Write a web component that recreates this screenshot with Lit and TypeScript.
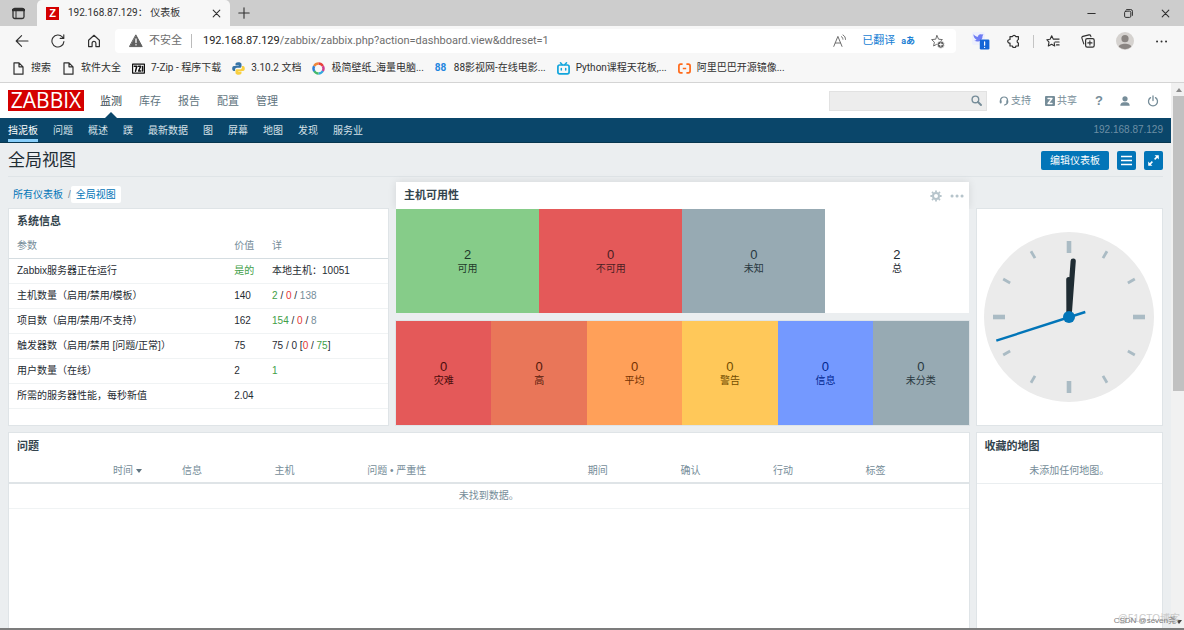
import { LitElement, html, svg, css } from "lit";
import { customElement } from "lit/decorators.js";
import { classMap } from "lit/directives/class-map.js";
import { styleMap } from "lit/directives/style-map.js";

const icon = (size: number, box: string, body: unknown) => html`
  <svg width=${size} height=${size} viewBox=${box} fill="none" stroke="currentColor"
    stroke-linecap="round" stroke-linejoin="round" aria-hidden="true">${body}</svg>`;

const STAR = "M7 1.6 L8.6 5.2 12.4 5.6 9.6 8.2 10.4 12 7 10.1 3.6 12 4.4 8.2 1.6 5.6 5.4 5.2Z";

const icons = {
  tabs: icon(13, "0 0 13 13", svg`<rect x="1" y="1.5" width="11" height="10" rx="1.8" stroke-width="1.3"/><path d="M1 3h11" stroke-width="2.6"/><path d="M4 3.5v8" stroke-width="1"/>`),
  close: icon(9, "0 0 9 9", svg`<path d="M1.2 1.2l6.6 6.6M7.8 1.2L1.2 7.8" stroke-width="1.1"/>`),
  plus: icon(12, "0 0 12 12", svg`<path d="M6 .8v10.4M.8 6h10.4" stroke-width="1.1"/>`),
  minimize: icon(9, "0 0 9 9", svg`<path d="M.8 4.5h7.4"/>`),
  restore: icon(9, "0 0 9 9", svg`<rect x=".6" y="2.2" width="6.2" height="6.2" rx="1.2"/><path d="M2.6.6h4.2a1.6 1.6 0 0 1 1.6 1.6v4.2"/>`),
  back: icon(14, "0 0 14 14", svg`<path d="M13 7H1.2M6.6 1.6L1.2 7l5.4 5.4" stroke-width="1.1"/>`),
  refresh: icon(14, "0 0 14 14", svg`<path d="M12.9 7.6A6 6 0 1 1 11.4 3l1.2 1.2M12.8.8v3.6H9.2" stroke-width="1.1"/>`),
  home: icon(14, "0 0 14 14", svg`<path d="M1.6 6.3L7 1.3l5.4 5v6.3H8.9V9.2a1.9 1.9 0 0 0-3.8 0v3.4H1.6Z" stroke-width="1.2"/>`),
  warning: icon(14, "0 0 14 14", svg`<path d="M7 1.2L13.2 12.6H.8Z" fill="#5f5f5f" stroke="#5f5f5f"/><path d="M7 5v3.6M7 10.6v.3" stroke="#fff" stroke-width="1.3"/>`),
  readAloud: icon(14, "0 0 14 14", svg`<path d="M.8 12.4L4.9 2.4 9 12.4M2.3 9h5.2M8.4 2.6c1 .6 1.4 1.4 1.5 2.6M10 1c1.7 1 2.5 2.4 2.5 4.4"/>`),
  starAdd: icon(15, "0 0 15 15", svg`<path d=${STAR}/><circle cx="10.8" cy="10.6" r="3.6" fill="#5c5c5c" stroke="#fff" stroke-width=".7"/><path d="M10.8 9v3.2M9.2 10.6h3.2" stroke="#fff"/>`),
  bird: icon(18, "0 0 18 18", svg`<rect width="13" height="13" rx="2" fill="#eef0fd" stroke="none"/><path d="M1.4 2.2c1.8 2 3.4 2.4 4.6 2.6C6 2.8 8 1.4 9.8 2.6l1.6-.4-.9 2c0 4.4-4.5 6.8-8.3 4.4 1 0 1.8-.3 2.4-.9C2.5 6.800 1.400 4.600 1.400 2.200Z" fill="#6f7df4" stroke="none"/><rect x="7.800" y="7.500" width="9.600" height="10" rx="1.200" fill="#1466d6" stroke="none"/><path d="M12.600 9.800v3.400M12.600 15.300v.1" stroke="#fff" stroke-width="1.200"/>`),
  puzzle: icon(14, "0 0 14 14", svg`<path d="M3 2.600h2.400a1.800 1.800 0 0 1 3.400 0h2.600v2.900a1.900 1.900 0 0 0 0 3.600v2.900H8.900a1.700 1.700 0 0 1-3.400 0H3V9a1.700 1.700 0 0 1-1-3.300 1.700 1.700 0 0 1 1-.2Z" stroke-width="1.200"/>`),
  favorites: icon(14, "0 0 14 14", svg`<path d="M8.200 8.800l.5 3.200L5.600 10.200 2.300 12l.7-3.800L.8 5.700l3.300-.5L5.700 1.800l1.500 3.300h5.900M9 8h4.100M10.500 10.900h2.600" stroke-width="1.100"/>`),
  collections: icon(14, "0 0 14 14", svg`<rect x="4.600" y="4.600" width="8.600" height="8.600" rx="1.600" stroke-width="1.200"/><path d="M8.900 6.800v4.200M6.800 8.900H11M2.800 9.900L.9 4.200a1.400 1.400 0 0 1 1-1.800L8 .9a1.400 1.400 0 0 1 1.700 1l.2.800" stroke-width="1.100"/>`),
  avatar: icon(18, "0 0 18 18", svg`<circle cx="9" cy="9" r="9" fill="#d5d2cf" stroke="none"/><circle cx="9" cy="6.700" r="3.600" fill="#8a8582" stroke="none"/><path d="M2.800 14.800c0-4 12.400-4 12.400 0A9 9 0 0 1 2.800 14.800Z" fill="#8a8582" stroke="none"/>`),
  more: icon(13, "0 0 13 13", svg`<path d="M2 6.500h.1M6.500 6.500h.1M11 6.500h.1" stroke-width="1.900"/>`),
  doc: icon(13, "0 0 13 13", svg`<path d="M2 .8h5l4 4v7.400H2ZM7 .8v4h4" stroke-width="1.200"/>`),
  sevenZip: icon(13, "0 0 13 13", svg`<rect x=".6" y="2.100" width="11.800" height="9" fill="#fff" stroke="#111" stroke-width="1.200"/><path d="M2.300 4.300h2.500L3.500 9.300M6.500 4.300h2.200L6.600 9h2.200M10.600 4.500v4.600" stroke="#111" stroke-width="1.500"/>`),
  python: icon(13, "0 0 13 13", svg`<path d="M6.300.3C3.700.3 3.500 1.400 3.500 2.300v1.200h3.200v.6H2C.7 4.100.2 5.200.2 6.600c0 1.500.6 2.500 1.700 2.500h1.200V7.600c0-1 .8-1.800 1.800-1.800H8c.9 0 1.500-.7 1.500-1.500v-2C9.500.8 8 .3 6.300.3Z" fill="#3874a6" stroke="none"/><path d="M6.700 12.700c2.600 0 2.800-1.100 2.800-2V9.500H6.300v-.6H11c1.300 0 1.800-1.100 1.800-2.500 0-1.500-.6-2.500-1.700-2.500H9.900v1.500c0 1-.8 1.800-1.800 1.800H5c-.9 0-1.500.7-1.500 1.500v2c0 1.500 1.500 2 3.200 2Z" fill="#f8cf40" stroke="none"/>`),
  wheel: icon(13, "0 0 13 13", svg`<g fill="none" stroke-width="2.500" stroke-linecap="butt"><path d="M2.200 4A5 5 0 0 1 6.500 1.500" stroke="#f0883a"/><path d="M6.500 1.500A5 5 0 0 1 10.800 4" stroke="#e8403c"/><path d="M10.800 4A5 5 0 0 1 10.800 9" stroke="#cf3f8d"/><path d="M10.800 9A5 5 0 0 1 6.500 11.500" stroke="#37a8e0"/><path d="M6.500 11.500A5 5 0 0 1 2.200 9" stroke="#43b96b"/><path d="M2.200 9A5 5 0 0 1 2.200 4" stroke="#2f7fd6"/></g>`),
  tv: icon(13, "0 0 13 13", svg`<rect x=".9" y="3" width="11.200" height="8.800" rx="1.800" stroke="#12a5dc" stroke-width="1.700"/><path d="M3.500.8l1.600 1.800M9.500.8L7.900 2.600M4.300 6.500v1.600M8.700 6.500v1.600" stroke="#12a5dc" stroke-width="1.500"/>`),
  aliyun: icon(13, "0 0 13 13", svg`<path d="M4.600 2.200H2.700A1.900 1.900 0 0 0 .9 4.100v4.800a1.900 1.900 0 0 0 1.800 1.900h1.900M8.400 2.200h1.900a1.900 1.900 0 0 1 1.800 1.900v4.800a1.900 1.900 0 0 1-1.800 1.900H8.400M4.800 6.500h3.400" stroke="#ff6a1a" stroke-width="1.700" stroke-linecap="butt"/>`),
  search: icon(11, "0 0 11 11", svg`<circle cx="4.400" cy="4.400" r="3.300" stroke-width="1.400"/><path d="M7 7l3 3" stroke-width="1.900"/>`),
  headset: icon(10, "0 0 10 10", svg`<path d="M1.500 5.800V4.500a3.500 3.500 0 0 1 7 0v1.300c0 2-1 2.900-3 3.200" stroke-width="1.200"/><path d="M1.700 5v1.600M8.300 5v1.600" stroke-width="1.900"/>`),
  share: icon(10, "0 0 10 10", svg`<rect width="10" height="10" rx="1" fill="currentColor" stroke="none"/><path d="M3 2.500h4L3 7.500h4" stroke="#fff" stroke-width="1.300"/>`),
  person: icon(12, "0 0 12 12", svg`<circle cx="6" cy="3.800" r="2.600" fill="currentColor" stroke="none"/><path d="M1.300 10.800c0-3.200 2.400-3.600 4.700-3.600s4.700.4 4.700 3.600Z" fill="currentColor" stroke="none"/>`),
  power: icon(12, "0 0 12 12", svg`<path d="M3.500 2.600a4.500 4.500 0 1 0 5 0M6 1v4.600" stroke-width="1.300"/>`),
  list: icon(13, "0 0 13 13", svg`<path d="M1 2.500h11M1 6.500h11M1 10.500h11" stroke-width="1.500" stroke-linecap="butt"/>`),
  expand: icon(13, "0 0 13 13", svg`<path d="M7.600 5.400l3-3M5.400 7.600l-3 3" stroke-width="1.500" stroke-linecap="butt"/><path d="M7.600 1.200h4.200v4.200ZM1.200 7.600v4.200h4.200Z" fill="currentColor" stroke="none"/>`),
  gear: icon(12, "0 0 12 12", svg`<circle cx="6" cy="6" r="3" stroke-width="2"/><path d="M6 .4v1.600M6 10v1.600M.4 6H2M10 6h1.600M2 2l1.200 1.200M8.800 8.800L10 10M2 10l1.200-1.200M8.800 3.200L10 2" stroke-width="1.800" stroke-linecap="butt"/>`),
  dots: icon(14, "0 0 14 14", svg`<path d="M2 7h.1M7 7h.1M12 7h.1" stroke-width="3"/>`),
};

const base = css`
  *, *::before, *::after { box-sizing: border-box; }
  svg { display: block; flex: none; }
  button { display: flex; align-items: center; justify-content: center; margin: 0; padding: 0; border: 0; background: none; color: inherit; font: inherit; }
  a { color: inherit; text-decoration: none; }
  input { min-width: 0; margin: 0; padding: 0; border: 0; outline: 0; background: none; color: inherit; font: inherit; }
  .row { display: flex; align-items: center; }
`;

@customElement("browser-chrome")
class BrowserChrome extends LitElement {
  static styles = [base, css`
    :host { display: block; flex: none; color: #303030; background: #f7f7f7; border-bottom: 1px solid #d4d4d4;
      font: 10px/16px Roboto, "Noto Sans CJK SC", sans-serif; white-space: nowrap; }
    .tabs { height: 26px; background: #cdcdcd; padding-right: 14px; }
    .menu { width: 37px; height: 26px; }
    .tab { width: 193px; height: 26px; padding: 0 9px; background: #f7f7f7; border-radius: 5px 5px 0 0; }
    .fav { width: 13px; height: 13px; margin-right: 9px; background: #d40000; color: #fff; font: bold 11px/13px "Liberation Sans", sans-serif; text-align: center; }
    .grow { flex: 1; }
    .new { margin-left: 8px; }
    .window { gap: 28px; }
    .tools { height: 30px; padding: 0 16px 0 15px; }
    .nav { gap: 22px; width: 100px; }
    .address { flex: 1; height: 24px; padding: 0 11px 0 14px; background: #fff; border-radius: 4px; font-size: 11px; color: #6e6e6e; }
    .secure { gap: 6px; padding-right: 9px; margin-right: 11px; border-right: 1px solid #bbb; line-height: 12px; }
    .host { color: #222; }
    .translate { color: #1a7fd4; gap: 6px; margin: 0 15px; }
    .kana { font-weight: bold; font-size: 9px; }
    .ext { margin-left: 16px; gap: 21px; height: 18px; }
    .shop { margin-right: -4px; }
    .line { width: 1px; height: 13px; background: #c4c4c4; margin: 0 -9px; }
    .marks { height: 26px; padding: 0 12px 2px; gap: 11px; }
    .mark { gap: 6px; }
    .badge { width: 13px; color: #1f86df; font-weight: bold; }
  `];

  marks = [
    [icons.doc, "搜索"], [icons.doc, "软件大全"], [icons.sevenZip, "7-Zip - 程序下载"], [icons.python, "3.10.2 文档"],
    [icons.wheel, "极简壁纸_海量电脑..."], [html`<span class="badge">88</span>`, "88影视网-在线电影..."],
    [icons.tv, "Python课程天花板,..."], [icons.aliyun, "阿里巴巴开源镜像..."],
  ];

  render() {
    return html`
      <div class="tabs row">
        <button class="menu" aria-label="标签页">${icons.tabs}</button>
        <div class="tab row"><span class="fav">Z</span><span class="grow">192.168.87.129： 仪表板</span><button aria-label="关闭标签页">${icons.close}</button></div>
        <button class="new" aria-label="新建标签页">${icons.plus}</button>
        <span class="grow"></span>
        <div class="window row">
          <button aria-label="最小化">${icons.minimize}</button><button aria-label="还原">${icons.restore}</button><button aria-label="关闭">${icons.close}</button>
        </div>
      </div>
      <div class="tools row">
        <div class="nav row"><button aria-label="后退">${icons.back}</button><button aria-label="刷新">${icons.refresh}</button><button aria-label="主页">${icons.home}</button></div>
        <div class="address row">
          <span class="secure row">${icons.warning}不安全</span>
          <label class="host" for="url">192.168.87.129</label>
          <input class="grow" id="url" value="/zabbix/zabbix.php?action=dashboard.view&ddreset=1">
          <button aria-label="朗读">${icons.readAloud}</button>
          <button class="translate">已翻译 <span class="kana">aあ</span></button>
          <button aria-label="收藏">${icons.starAdd}</button>
        </div>
        <div class="ext row">
          <button class="shop" aria-label="扩展">${icons.bird}</button><button aria-label="插件">${icons.puzzle}</button><span class="line"></span>
          <button aria-label="收藏夹">${icons.favorites}</button><button aria-label="集锦">${icons.collections}</button>
          <button aria-label="个人资料">${icons.avatar}</button><button aria-label="更多">${icons.more}</button>
        </div>
      </div>
      <nav class="marks row">${this.marks.map(([i, t]) => html`<a class="mark row" href="#">${i}<span>${t}</span></a>`)}</nav>`;
  }
}

@customElement("clock-face")
class ClockFace extends LitElement {
  static styles = css`:host { display: block; } svg { display: block; }`;
  render() {
    const ticks = Array.from({ length: 12 }, (_, i) => {
      const main = i % 3 === 0;
      return svg`<line y1="-76" y2=${main ? -64 : -68} stroke="#aabbc4" stroke-width=${main ? 4.6 : 2.8} transform="rotate(${i * 30})"/>`;
    });
    return html`<svg width="170" height="170" viewBox="-85 -85 170 170" role="img" aria-label="时钟">
      <circle r="85" fill="#ebebeb"/>${ticks}
      <g stroke="#1f2c33" stroke-width="5.2" stroke-linecap="round"><path d="M0 0L-.2 -37.500"/><path d="M0 0L4.200 -56"/></g>
      <path d="M16.300 -5L-72.700 23.700" stroke="#0275b8" stroke-width="2.400"/><circle r="6" fill="#0275b8"/>
    </svg>`;
  }
}

type Tile = [count: string, label: string, bg: string, fg: string];

@customElement("app-root")
class AppRoot extends LitElement {
  static styles = [base, css`
    :host { display: flex; flex-direction: column; height: 100vh; overflow: hidden; position: relative;
      border-bottom: 2px solid #7c7c7c; color: #1f2c33; background: #ebeef0;
      font: 10px/16px "Liberation Sans", "Noto Sans CJK SC", sans-serif; box-sizing: border-box; }
    .view { display: flex; flex: 1; min-height: 0; }
    .page { display: flex; flex-direction: column; flex: 1; min-width: 0; }
    .grow { flex: 1; }
    .scroll { width: 13px; padding: 5px 0 4px 2px; background: #f1f1f1; display: flex; flex-direction: column; align-items: center; }
    .up, .down { border: 3px solid transparent; height: 0; }
    .up { border-top: 0; border-bottom: 4px solid #8b8b8b; }
    .down { border-bottom: 0; border-top: 4px solid #404040; }
    .thumb { width: 11px; height: 295px; margin: 4px 0 auto; background: #c1c1c1; }

    .top { height: 35px; padding: 0 12px 0 8px; background: #fff; color: #768d99; }
    .logo { height: 21px; width: 76px; margin-right: 16px; background: #d40000; color: #fff; text-align: center; font: 21px/21px "Open Sans", sans-serif; }
    .main { gap: 17px; font-size: 11px; color: #5f7480; align-self: stretch; }
    .main a { display: flex; align-items: center; height: 35px; position: relative; }
    .main .on { color: #33444d; }
    .on::after { content: ""; position: absolute; left: 50%; bottom: 0; margin-left: -6px; border: 6px solid transparent; border-top: 0; border-bottom-color: #0a466a; }
    .search { width: 158px; height: 20px; padding: 0 4px; background: #ededed; border: 1px solid #e2e2e2; margin-right: 12px; }
    .tool { gap: 2px; margin-right: 14px; }
    .account { gap: 16px; margin-left: 4px; }
    .q { font-weight: bold; font-size: 13px; }

    .sub { height: 25px; padding: 0 8px; gap: 15px; background: #0a466a; color: #d5e0e7; border-bottom: 1px solid #07364f; }
    .sub a { display: flex; align-items: center; height: 24px; border-bottom: 3px solid transparent; border-top: 5px solid transparent; }
    .sub .here { border-bottom-color: #87cefa; color: #fff; }
    .server { color: #6d8fa5; }

    .head { height: 34px; margin: 0 8px; padding-top: 2px; gap: 8px; border-bottom: 1px solid #dfe4e7; }
    h1 { flex: 1; margin: 0; font: 17px/24px "Liberation Sans", "Noto Sans CJK SC", sans-serif; }
    .btn { height: 19px; min-width: 19px; background: #0275b8; color: #fff; border-radius: 2px; }
    .edit { padding: 0 9px; }
    .crumbs { height: 32px; padding: 3px 13px 0; gap: 5px; color: #0275b8; }
    .slash { color: #768d99; }
    .now { padding: 0 5px; margin-left: -5px; background: #fff; border-radius: 2px; line-height: 17px; }

    .grid { flex: 1; min-height: 0; display: grid; grid-template-columns: repeat(12, 1fr); grid-template-rows: 104px 104px 1fr; gap: 8px; padding: 0 9px; }
    .widget { min-width: 0; background: #fff; box-shadow: 0 0 0 1px #dfe4e7; position: relative; }
    .info { grid-area: 1 / 1 / 3 / 5; }
    .hosts { grid-area: 1 / 5 / 2 / 11; box-shadow: none; }
    .sev { grid-area: 2 / 5 / 3 / 11; }
    .clock { grid-area: 1 / 11 / 3 / 13; display: flex; align-items: center; justify-content: center; }
    .problems { grid-area: 3 / 1 / 4 / 11; padding-top: 1px; }
    .maps { grid-area: 3 / 11 / 4 / 13; padding-top: 1px; }
    .lift { position: absolute; left: 0; right: 0; bottom: 100%; height: 27px; padding: 0 5px 0 8px; gap: 8px; background: #fff; color: #b6c4cb; box-shadow: 0 0 9px rgba(0, 0, 0, .1); clip-path: inset(-12px -12px 0 -12px); }
    h2 { margin: 0; padding: 0 8px; color: #33444d; font: bold 11px/25px "Liberation Sans", "Noto Sans CJK SC", sans-serif; }
    .lift h2 { flex: 1; padding: 0; }
    .tiles { display: flex; height: 100%; }
    .tile { flex: 1; display: flex; flex-direction: column; align-items: center; justify-content: center; line-height: 14px; }
    .num { font-size: 13px; line-height: 15px; }

    table { width: 100%; border-collapse: separate; border-spacing: 0; table-layout: fixed; }
    th, td { height: 25px; padding: 0 8px; text-align: left; white-space: nowrap; border-bottom: 1px solid #f0f3f4; }
    th { color: #768d99; font-weight: normal; border-bottom-color: #d5dde1; }
    .c1 { width: 57.3%; } .c2 { width: 10%; }
    .p-time { width: 14.7%; } .p-gap { width: 2.5%; } .p-s { width: 9.650%; } .p-wide { width: 23%; }
    .problems th { border-bottom: 2px solid #dfe4e7; }
    .problems .time { text-align: right; }
    .sort { display: inline-block; border: 3px solid transparent; border-top: 4px solid #5f7480; border-bottom: 0; margin-left: 3px; vertical-align: 1px; }
    .empty { text-align: center; color: #768d99; margin: 0; }
    .line { line-height: 24px; border-bottom: 1px solid #eaeef0; }
    .ok { color: #429e47; } .bad { color: #e33734; } .dim { color: #768d99; }
    .mark { position: absolute; bottom: 0; white-space: nowrap; line-height: 15px; }
    .m1 { right: 8px; color: #808080; font-size: 8px; }
    .m2 { right: 4px; bottom: 2px; color: #cccccc; }
  `];

  hosts: Tile[] = [
    ["2", "可用", "#86cc89", "#1f3a2a"], ["0", "不可用", "#e45959", "#4a2023"],
    ["0", "未知", "#97aab3", "#28383f"], ["2", "总", "#ffffff", "#1f2c33"],
  ];
  severities: Tile[] = [
    ["0", "灾难", "#e45959", "#4b0c0c"], ["0", "高", "#e97659", "#52190b"], ["0", "平均", "#ffa059", "#733100"],
    ["0", "警告", "#ffc859", "#734d00"], ["0", "信息", "#7499ff", "#00268e"], ["0", "未分类", "#97aab3", "#28383f"],
  ];
  rows = [
    ["Zabbix服务器正在运行", html`<span class="ok">是的</span>`, "本地主机：10051"],
    ["主机数量（启用/禁用/模板）", "140", html`<span class="ok">2</span> / <span class="bad">0</span> / <span class="dim">138</span>`],
    ["项目数（启用/禁用/不支持）", "162", html`<span class="ok">154</span> / <span class="bad">0</span> / <span class="dim">8</span>`],
    ["触发器数（启用/禁用 [问题/正常]）", "75", html`75 / 0 [<span class="bad">0</span> / <span class="ok">75</span>]`],
    ["用户数量（在线）", "2", html`<span class="ok">1</span>`],
    ["所需的服务器性能，每秒新值", "2.04", ""],
  ];

  tiles(list: Tile[]) {
    return html`<div class="tiles">${list.map(([n, label, background, color]) => html`
      <div class="tile" style=${styleMap({ background, color })}><span class="num">${n}</span><span>${label}</span></div>`)}</div>`;
  }

  render() {
    return html`
      <browser-chrome></browser-chrome>
      <div class="view">
        <div class="page">
          <header class="top row">
            <a class="logo" href="#">ZABBIX</a>
            <nav class="main row">${["监测", "库存", "报告", "配置", "管理"].map((t, i) => html`<a href="#" class=${classMap({ on: i === 0 })}>${t}</a>`)}</nav>
            <span class="grow"></span>
            <div class="search row"><input class="grow" type="text" aria-label="搜索"><button aria-label="搜索">${icons.search}</button></div>
            <a class="tool row" href="#">${icons.headset}支持</a>
            <a class="tool row" href="#">${icons.share}共享</a>
            <div class="account row"><a class="q" href="#">?</a><a href="#" aria-label="用户">${icons.person}</a><a href="#" aria-label="退出">${icons.power}</a></div>
          </header>
          <nav class="sub row">
            ${["挡泥板", "问题", "概述", "蹼", "最新数据", "图", "屏幕", "地图", "发现", "服务业"].map((t, i) => html`<a href="#" class=${classMap({ here: i === 0 })}>${t}</a>`)}
            <span class="grow"></span><span class="server">192.168.87.129</span>
          </nav>
          <div class="head row">
            <h1>全局视图</h1>
            <button class="btn edit">编辑仪表板</button>
            <button class="btn" aria-label="菜单">${icons.list}</button>
            <button class="btn" aria-label="全屏">${icons.expand}</button>
          </div>
          <div class="crumbs row"><a href="#">所有仪表板</a><span class="slash">/</span><a class="now" href="#">全局视图</a></div>
          <main class="grid">
            <section class="widget info">
              <h2>系统信息</h2>
              <table>
                <colgroup><col class="c1"><col class="c2"><col></colgroup>
                <thead><tr><th>参数</th><th>价值</th><th>详</th></tr></thead>
                <tbody>${this.rows.map(r => html`<tr>${r.map(c => html`<td>${c}</td>`)}</tr>`)}</tbody>
              </table>
            </section>
            <section class="widget hosts">
              <div class="lift row"><h2>主机可用性</h2><button aria-label="设置">${icons.gear}</button><button aria-label="更多">${icons.dots}</button></div>
              ${this.tiles(this.hosts)}
            </section>
            <section class="widget sev">${this.tiles(this.severities)}</section>
            <section class="widget clock"><clock-face></clock-face></section>
            <section class="widget problems">
              <h2>问题</h2>
              <table>
                <colgroup><col class="p-time"><col class="p-gap"><col class="p-s"><col class="p-s"><col class="p-wide"><col class="p-s"><col class="p-s"><col class="p-s"><col></colgroup>
                <thead><tr><th class="time">时间<span class="sort"></span></th><th></th><th>信息</th><th>主机</th><th>问题 • 严重性</th><th>期间</th><th>确认</th><th>行动</th><th>标签</th></tr></thead>
                <tbody><tr><td colspan="9" class="empty">未找到数据。</td></tr></tbody>
              </table>
            </section>
            <section class="widget maps"><h2>收藏的地图</h2><p class="empty line">未添加任何地图。</p></section>
          </main>
        </div>
        <div class="scroll"><span class="up"></span><span class="thumb"></span><span class="down"></span></div>
      </div>
      <span class="mark m2">@51CTO博客</span><span class="mark m1">CSDN @seven尧</span>`;
  }
}
